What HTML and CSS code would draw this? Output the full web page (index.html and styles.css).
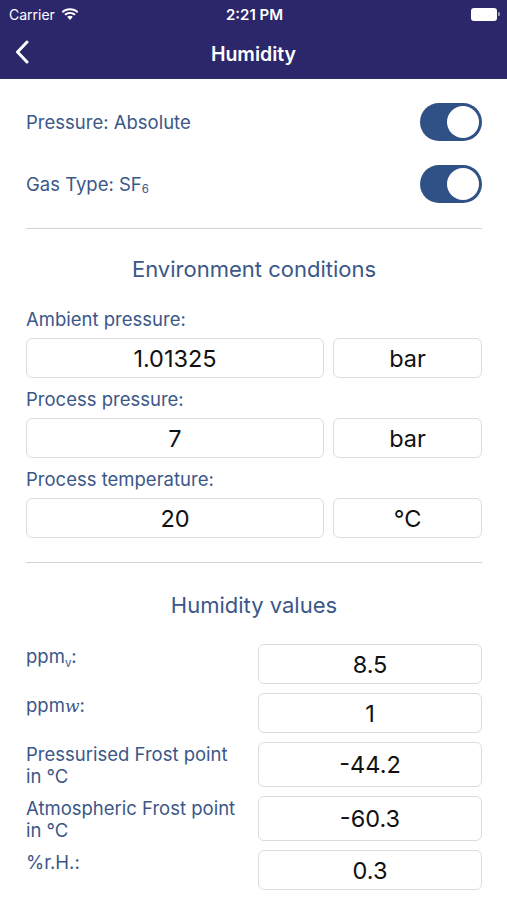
FILE: index.html
```html
<!DOCTYPE html>
<html lang="en">
<head>
    <meta charset="UTF-8">
    <meta name="viewport" content="width=device-width, initial-scale=1.0">
    <title>Humidity</title>
    <link rel="stylesheet" href="styles.css">
</head>
<body>
    <header class="topbar">
        <div class="status">
            <div class="carrier">
                Carrier
                <svg class="wifi" width="18" height="13" viewBox="0 0 18 13">
                    <path d="M9 2.2c2.7 0 5.1 1 7 2.7l1.3-1.4C15.1 1.5 12.2.3 9 .3S2.9 1.5.7 3.5L2 4.9c1.9-1.7 4.3-2.7 7-2.7z" fill="#fff"/>
                    <path d="M9 5.9c1.7 0 3.2.6 4.4 1.6l1.3-1.4C13.2 4.8 11.2 4 9 4S4.8 4.8 3.3 6.1l1.3 1.4C5.8 6.5 7.3 5.9 9 5.9z" fill="#fff"/>
                    <path d="M9 7.8c-1.1 0-2 .4-2.8 1L9 12l2.8-3.2C11 8.2 10.1 7.8 9 7.8z" fill="#fff"/>
                </svg>
            </div>
            <div class="clock">2:21 PM</div>
            <div class="battery"><span class="battery-level"></span></div>
        </div>
        <div class="navbar">
            <svg class="back" width="14" height="24" viewBox="0 0 14 24">
                <path d="M12 2L2.5 12 12 22" fill="none" stroke="#fff" stroke-width="3" stroke-linecap="round" stroke-linejoin="round"/>
            </svg>
            <h1>Humidity</h1>
        </div>
    </header>

    <main class="content">
        <div class="switch-row">
            <span>Pressure: Absolute</span>
            <div class="switch"><span class="knob"></span></div>
        </div>
        <div class="switch-row">
            <span>Gas Type: SF<sub class="small">6</sub></span>
            <div class="switch"><span class="knob"></span></div>
        </div>

        <hr class="divider">

        <h2 class="section-title">Environment conditions</h2>

        <div class="field">
            <label>Ambient pressure:</label>
            <div class="input-pair">
                <div class="box">1.01325</div>
                <div class="box">bar</div>
            </div>
        </div>
        <div class="field">
            <label>Process pressure:</label>
            <div class="input-pair">
                <div class="box">7</div>
                <div class="box">bar</div>
            </div>
        </div>
        <div class="field">
            <label>Process temperature:</label>
            <div class="input-pair">
                <div class="box">20</div>
                <div class="box">°C</div>
            </div>
        </div>

        <hr class="divider second">

        <h2 class="section-title humid">Humidity values</h2>

        <div class="values">
            <div class="value-label">ppm<sub class="sub-v">v</sub>:</div>
            <div class="box">8.5</div>

            <div class="value-label">ppm<i class="w">w</i>:</div>
            <div class="box">1</div>

            <div class="value-label">Pressurised Frost point<br>in °C</div>
            <div class="box">-44.2</div>

            <div class="value-label">Atmospheric Frost point<br>in °C</div>
            <div class="box">-60.3</div>

            <div class="value-label">%r.H.:</div>
            <div class="box">0.3</div>
        </div>
    </main>
</body>
</html>
```

FILE: styles.css
```css
body {
    margin: 0;
    background: #fff;
    font-family: Inter, "Noto Sans", sans-serif;
    color: #3b5788;
}

/* Barra superior */
.topbar {
    background: #2c276a;
    color: #fff;
    height: 79px;
}
.status {
    display: flex;
    align-items: center;
    justify-content: space-between;
    height: 28px;
    padding: 0 7px 0 9px;
    font-size: 14px;
}
.carrier {
    display: flex;
    align-items: center;
    gap: 6px;
    width: 120px;
}
.clock {
    font-weight: 600;
    font-size: 15px;
}
.battery {
    width: 120px;
    display: flex;
    justify-content: flex-end;
    align-items: center;
}
.battery-level {
    display: block;
    width: 22px;
    height: 9px;
    background: #fff;
    border-radius: 3px;
    border: 2px solid rgba(255, 255, 255, 0.5);
    position: relative;
    margin-right: 3px;
}
.battery-level::after {
    content: "";
    position: absolute;
    right: -5px;
    top: 2.5px;
    width: 2px;
    height: 4px;
    background: rgba(255, 255, 255, 0.5);
    border-radius: 0 1px 1px 0;
}
.navbar {
    position: relative;
    height: 51px;
    display: flex;
    align-items: center;
    justify-content: center;
}
.navbar h1 {
    margin: 0;
    font-size: 19.5px;
    font-weight: 600;
}
.back {
    position: absolute;
    left: 15px;
    top: 12px;
}

/* Contenido */
.content {
    padding: 12px 25px 0 26px;
}
.switch-row {
    height: 62px;
    display: flex;
    align-items: center;
    justify-content: space-between;
    font-size: 18.5px;
}
.small {
    font-size: 11.5px;
    vertical-align: -2px;
}
.switch {
    width: 62px;
    height: 38px;
    border-radius: 19px;
    background: #2f5186;
    position: relative;
}
.knob {
    position: absolute;
    right: 3px;
    top: 3px;
    width: 32px;
    height: 32px;
    border-radius: 50%;
    background: #fff;
}
.divider {
    border: none;
    border-top: 1.5px solid #d3d3d3;
    margin: 13px 0 0;
}
.divider.second {
    margin-top: 24px;
}
.section-title {
    margin: 26px 0 24px;
    font-size: 22px;
    font-weight: 400;
    line-height: 28px;
    text-align: center;
}
.section-title.humid {
    margin: 28px 0 25px;
}
.field label {
    display: block;
    font-size: 18.5px;
    line-height: 24px;
}
.field + .field {
    margin-top: 9px;
}
.input-pair {
    display: grid;
    grid-template-columns: 298px 1fr;
    gap: 9px;
    margin-top: 7px;
}
.box {
    border: 1.5px solid #dcdcdc;
    border-radius: 6px;
    height: 40px;
    box-sizing: border-box;
    display: flex;
    align-items: center;
    justify-content: center;
    color: #111;
    font-size: 23.5px;
}
.values {
    display: grid;
    grid-template-columns: 232px 1fr;
    row-gap: 9px;
}
.values .box {
    height: auto;
    min-height: 40px;
}
.value-label {
    font-size: 18.5px;
    line-height: 22px;
    padding: 1px 0 0;
    min-height: 44px;
    box-sizing: border-box;
}
.values .value-label:nth-child(-n+4),
.values .value-label:nth-child(n+9) {
    min-height: 0;
}
.sub-v {
    font-size: 11.5px;
    vertical-align: -4px;
}
.w {
    font-family: "DejaVu Serif", serif;
    font-size: 17px;
}
```
